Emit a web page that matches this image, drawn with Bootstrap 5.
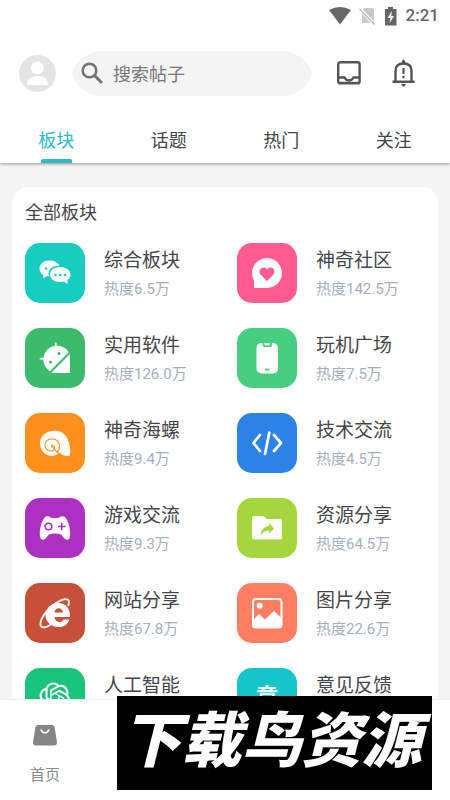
<!DOCTYPE html>
<html lang="zh-CN">
<head>
<meta charset="utf-8">
<meta name="viewport" content="width=device-width, initial-scale=1">
<title>板块</title>
<link href="https://cdn.jsdelivr.net/npm/bootstrap@5.3.0/dist/css/bootstrap.min.css" rel="stylesheet">
<style>
body { font-family: Roboto, "Noto Sans CJK SC", sans-serif; color: #45454a; background: #fff; }
svg { display: block; flex: none; }
.status-bar { height: 32px; padding-right: 11px; color: #666; font-size: 17px; font-weight: 500; }
.top-row { height: 86px; padding: 0 34px 4px 18px; }
.search-box { height: 45px; margin-left: 16px; }
.search-box input, .search-box input:focus { background: #f4f4f4; font-size: 18px; color: #45454a; padding: 2px 0 0 5px; height: 45px; min-width: 0; }
.search-box input::placeholder { color: #77777b; opacity: 1; }
.top-icons { gap: 27px; margin-left: 23px; color: #55555a; }
.app-header { box-shadow: 0 1px 3px rgba(0,0,0,.4); z-index: 1; }
.tab-link { height: 45px; color: #45454a; font-size: 18px; line-height: 46px; text-decoration: none; }
.tab-link.active { color: #2bbcc4; }
.tab-link.active::after { content: ""; display: block; width: 31px; height: 4px; margin: -5px auto 0; background: #2bbcc4; border-radius: 2px 2px 0 0; }
.board-area { background: #f4f4f4; padding: 24px 12px 0; }
.board-panel { background: #fff; border-radius: 16px; padding-top: 13px; }
.board-title { font-size: 18px; line-height: 26px; margin: 0 0 17px 13px; }
.board-item { padding: 0 0 0 13px; height: 85px; color: inherit; text-decoration: none; }
.board-item:nth-child(even) { padding-left: 12px; }
.tile { width: 60px; height: 60px; border-radius: 15px; margin-right: 19px; color: #fff; flex: none; }
.tile-word { font-size: 23px; font-weight: 700; }
.board-name { font-size: 19px; line-height: 28px; margin-top: 4px; }
.board-heat { font-size: 15px; line-height: 24px; margin-top: 2px; color: #a3afc0; }
.c-chat { background: #17cdbf; } .c-heart { background: #ff5b90; }
.c-android { background: #3dbb6c; } .c-phone { background: #45cf7e; }
.c-shell { background: #ff901b; } .c-code { background: #2c83e5; }
.c-game { background: #ad30c2; } .c-folder { background: #a5d63d; }
.c-web { background: #c75138; } .c-photo { background: #ff7e61; }
.c-ai { background: #1ac47d; } .c-idea { background: #16c4cb; }
.bottom-bar { height: 101px; background: #fff; border-top: 1px solid #eee; z-index: 1; }
.home-link { width: 90px; padding-top: 25px; color: #8a8a8a; font-size: 15px; line-height: 24px; text-decoration: none; }
.home-link span { margin-top: 17px; }
.download-banner { left: 117px; right: 18px; bottom: 10px; height: 94px; padding-right: 6px; background: #000; color: #fff; z-index: 2; font-size: 60px; font-weight: 900; font-style: italic; line-height: 92px; }
</style>
<script src="https://cdn.jsdelivr.net/npm/bootstrap@5.3.0/dist/js/bootstrap.bundle.min.js"></script>
</head>
<body>
<div class="d-flex flex-column vh-100 overflow-hidden position-relative">
  <header class="app-header bg-white flex-shrink-0 position-relative">
    <div class="status-bar d-flex align-items-center justify-content-end">
      <svg width="22" height="18" viewBox="0 0 22 18" fill="currentColor"><path d="M0 3Q11-3 22 3L11 17.500Z"/></svg>
      <svg class="ms-2" width="17" height="18" viewBox="0 0 17 18"><path d="M5 1H13Q15 1 15 3V16H3V4Z" fill="#c9c9c9"/><path d="M0 1L16 18" stroke="#fff" stroke-width="3.500"/><path d="M.5 2L15.500 17.500" stroke="#bbb" stroke-width="1.500"/></svg>
      <svg class="ms-2 me-2" width="14" height="19" viewBox="0 0 14 19"><path d="M4 0H9V2H12.500V18.500H1V2H4Z" fill="#666"/><path d="M8 4L3.500 11H6.500L5.500 16L10 9H7.200Z" fill="#fff"/></svg>
      <span>2:21</span>
    </div>
    <div class="top-row d-flex align-items-center">
      <svg width="38" height="38" viewBox="0 0 38 38" role="img" aria-label="头像"><circle cx="19.500" cy="19.500" r="18.500" fill="#e4e4e4"/><circle cx="19.500" cy="14" r="6.500" fill="#fff"/><path d="M9 31C9 25 13 22 19.500 22S30 25 30 31Z" fill="#fff"/></svg>
      <form class="search-box d-flex flex-grow-1">
        <svg width="36" height="45" viewBox="0 0 36 45"><path d="M36 0H30C17 0 5 9 1 19Q-.5 22.500 1 26C5 36 17 45 30 45H36Z" fill="#f4f4f4"/><circle cx="17.500" cy="19.500" r="6.800" fill="none" stroke="#737377" stroke-width="2.500"/><path d="M22.500 24.500L30 32" stroke="#737377" stroke-width="3"/></svg>
        <input class="form-control border-0 rounded-0 shadow-none" type="search" placeholder="搜索帖子" aria-label="搜索帖子">
        <svg width="36" height="45" viewBox="0 0 36 45"><path d="M0 0H6C19 0 31 9 35 19Q36.500 22.500 35 26C31 36 19 45 6 45H0Z" fill="#f4f4f4"/></svg>
      </form>
      <div class="top-icons d-flex align-items-center">
        <button class="btn p-0 border-0" type="button" aria-label="收件箱"><svg width="28" height="28" viewBox="0 0 28 28" fill="none" stroke="#555559" stroke-width="2.400"><rect x="3.200" y="3.200" width="21.400" height="21.200" rx="2"/><path d="M3 18.500H9.500Q11 21.500 14 21.500T18.500 18.500H24.500"/><path d="M4 23.800H24" stroke-width="2"/></svg></button>
        <button class="btn p-0 border-0" type="button" aria-label="通知"><svg width="26" height="28" viewBox="0 0 26 28" fill="none" stroke="#555559" stroke-width="2.400"><path d="M5.500 22V12Q5.500 4.500 13.500 4.500T21.500 12V22M2.500 22.800H24.500"/><path d="M13.500 9V15M13.500 16.800V19.200" stroke-width="2.200"/><path d="M11 25H16L14.300 27.500H12.700Z" fill="#555559" stroke="none"/><path d="M11.500 4Q11.500 1 13.500 .500Q15.500 1 15.500 4Z" fill="#555559" stroke="none"/></svg></button>
      </div>
    </div>
    <nav class="row g-0 text-center">
      <a class="tab-link active col-3" href="#boards" aria-current="page">板块</a>
      <a class="tab-link col-3" href="#topics">话题</a>
      <a class="tab-link col-3" href="#hot">热门</a>
      <a class="tab-link col-3" href="#follow">关注</a>
    </nav>
  </header>

  <main class="board-area flex-grow-1 overflow-hidden" id="boards">
    <section class="board-panel">
      <h1 class="board-title fw-normal">全部板块</h1>
      <div class="row g-0">
        <a class="board-item col-6 d-flex" href="#b1"><span class="tile c-chat"><svg width="60" height="60" viewBox="0 0 60 60" fill="#fff"><path d="M24.500 17.500C19 17.500 14.500 20.700 14.500 25.500C14.500 28.500 16 30.500 18 31.800V35.500L21.500 33.300H24C22 27 27 22.500 34.500 22.800C33 19.500 29 17.500 24.500 17.500Z"/><path d="M35 24C29.300 24 25 27 25 31.500S29.300 39 35 39Q37 39 38.800 38.500L42.500 41V37C44.500 35.500 45.500 34 45.500 31.500C45.500 27 40.700 24 35 24Z"/><g fill="#17cdbf"><circle cx="21" cy="25.500" r="1.300"/><circle cx="30.500" cy="32" r="1.300"/><circle cx="35.200" cy="32" r="1.300"/><circle cx="40" cy="32" r="1.300"/></g></svg></span><span><span class="board-name d-block">综合板块</span><span class="board-heat d-block">热度6.5万</span></span></a>
        <a class="board-item col-6 d-flex" href="#b2"><span class="tile c-heart"><svg width="60" height="60" viewBox="0 0 60 60"><path d="M17 45V37.500A15 15 0 1 1 30 45Z" fill="#fff"/><path d="M30 38L24 32C19.500 27.500 26 21.500 30 26.500C34 21.500 40.500 27.500 36 32Z" fill="#ff5b90"/></svg></span><span><span class="board-name d-block">神奇社区</span><span class="board-heat d-block">热度142.5万</span></span></a>
        <a class="board-item col-6 d-flex" href="#b3"><span class="tile c-android"><svg width="60" height="60" viewBox="0 0 60 60"><path d="M45 26V45H26Z" fill="#fff"/><path d="M24.800 43.200A13.800 13.800 0 1 1 43.800 24.200Z" fill="#fff"/><path d="M30.700 15.500V23M15.500 30.700H22" stroke="#fff" stroke-width="1.800" stroke-linecap="round"/><circle cx="34" cy="25.500" r="1.500" fill="#3dbb6c"/><circle cx="25.500" cy="34" r="1.500" fill="#3dbb6c"/></svg></span><span><span class="board-name d-block">实用软件</span><span class="board-heat d-block">热度126.0万</span></span></a>
        <a class="board-item col-6 d-flex" href="#b4"><span class="tile c-phone"><svg width="60" height="60" viewBox="0 0 60 60"><rect x="19.500" y="15" width="21.500" height="30.500" rx="5" fill="#fff"/><path d="M25.500 14V17Q25.500 19 27.500 19H33Q35 19 35 17V14Z" fill="#45cf7e"/><path d="M27.500 15H33V16.500Q33 17.200 32 17.200H28.500Q27.500 17.200 27.500 16.500Z" fill="#fff"/><path d="M28 41.500H32.500" stroke="#45cf7e" stroke-width="1.700"/></svg></span><span><span class="board-name d-block">玩机广场</span><span class="board-heat d-block">热度7.5万</span></span></a>
        <a class="board-item col-6 d-flex" href="#b5"><span class="tile c-shell"><svg width="60" height="60" viewBox="0 0 60 60"><path d="M15 29C16 22 22 17.800 30 17.800C39 17.800 42.500 24 44.500 32C45.500 37 45.800 40 44.500 43C41 43.500 37 42 34.500 40C31 42.500 27 43.500 23.500 42.500C18 40.500 14.500 35 15 29Z" fill="#fff"/><path d="M36 42C32.500 40 30 37.500 28 34.500M28 34.500C25.500 34 26.500 31.500 28.200 32.200C30.500 33.500 29.500 38 26.500 38C22.500 38.500 19.500 35.500 20 31.500C20.500 28 23.500 26 27 26C32 26 35 29.500 34.500 34C34.300 36.500 33.200 38.500 31.500 39.500" fill="none" stroke="#ff901b" stroke-width="1.100"/></svg></span><span><span class="board-name d-block">神奇海螺</span><span class="board-heat d-block">热度9.4万</span></span></a>
        <a class="board-item col-6 d-flex" href="#b6"><span class="tile c-code"><svg width="60" height="60" viewBox="0 0 60 60" fill="none" stroke="#fff" stroke-width="2.700" stroke-linecap="round" stroke-linejoin="round"><path d="M23 22L16.500 30L23 38M37 22L44 30L37 38M32.300 19.500L28 41"/></svg></span><span><span class="board-name d-block">技术交流</span><span class="board-heat d-block">热度4.5万</span></span></a>
        <a class="board-item col-6 d-flex" href="#b7"><span class="tile c-game"><svg width="60" height="60" viewBox="0 0 60 60"><path d="M20 19C22 18 24 18 25.500 19.500Q30 21 34.500 19.500C36 18 38 18 40 19C43.500 23 45.500 31 45.200 37C45 42.500 41.500 43 39 40L36 36.500Q30 34.500 24 36.500L21 40C18.500 43 15 42.500 14.800 37C14.500 31 16.500 23 20 19Z" fill="#fff"/><circle cx="23.500" cy="28.500" r="3.300" fill="none" stroke="#ad30c2" stroke-width="1.600"/><path d="M33 28.500H40.500M36.700 24.800V32.200" stroke="#ad30c2" stroke-width="1.700"/></svg></span><span><span class="board-name d-block">游戏交流</span><span class="board-heat d-block">热度9.3万</span></span></a>
        <a class="board-item col-6 d-flex" href="#b8"><span class="tile c-folder"><svg width="60" height="60" viewBox="0 0 60 60"><path d="M17 18H26.500L29.500 21H43Q45 21 45 23V39.500Q45 41.500 43 41.500H17Q15 41.500 15 39.500V20Q15 18 17 18Z" fill="#fff"/><path d="M32 25L37 30.500L32 35.500V32.500C28 32.500 26 34 23 37.500C24 32 27 28.500 32 28Z" fill="#a5d63d"/></svg></span><span><span class="board-name d-block">资源分享</span><span class="board-heat d-block">热度64.5万</span></span></a>
        <a class="board-item col-6 d-flex" href="#b9"><span class="tile c-web"><svg width="60" height="60" viewBox="0 0 60 60"><path d="M45 34H29.500C30 40 37 40.500 38.500 36.500H44.500C42.500 42 38 44.500 33 44C26 43.500 20.500 39 20.500 32.500C20.500 25 26.500 20 33 20C41 20 45.500 26 45 34ZM29.500 29.500H38C37.500 24 30 23.500 29.500 29.500Z" fill="#fff"/><path d="M43 23C45.500 17.500 43 14.500 36.500 17.200C27.500 21 18 31 15.800 38.500C14 45.500 19 46 26 41.500" fill="none" stroke="#fff" stroke-width="1.900"/></svg></span><span><span class="board-name d-block">网站分享</span><span class="board-heat d-block">热度67.8万</span></span></a>
        <a class="board-item col-6 d-flex" href="#b10"><span class="tile c-photo"><svg width="60" height="60" viewBox="0 0 60 60"><rect x="16" y="16" width="28.500" height="28.500" rx="3" fill="none" stroke="#fff" stroke-width="2"/><circle cx="22.700" cy="22.700" r="3" fill="#fff"/><path d="M16 37L22 31L28 36.500L37 28L44.500 35V44.500H16Z" fill="#fff"/></svg></span><span><span class="board-name d-block">图片分享</span><span class="board-heat d-block">热度22.6万</span></span></a>
        <a class="board-item col-6 d-flex" href="#b11"><span class="tile c-ai"><svg width="60" height="60" viewBox="0 0 60 60" fill="#fff"><path transform="translate(14.500 14.500) scale(1.280)" d="M22.2819 9.8211a5.9847 5.9847 0 0 0-.5157-4.9108 6.0462 6.0462 0 0 0-6.5098-2.9A6.0651 6.0651 0 0 0 4.9807 4.1818a5.9847 5.9847 0 0 0-3.9977 2.9 6.0462 6.0462 0 0 0 .7427 7.0966 5.98 5.98 0 0 0 .511 4.9107 6.051 6.051 0 0 0 6.5146 2.9001A5.9847 5.9847 0 0 0 13.2599 24a6.0557 6.0557 0 0 0 5.7718-4.2058 5.9894 5.9894 0 0 0 3.9977-2.9001 6.0557 6.0557 0 0 0-.7475-7.0729zm-9.022 12.6081a4.4755 4.4755 0 0 1-2.8764-1.0408l.1419-.0804 4.7783-2.7582a.7948.7948 0 0 0 .3927-.6813v-6.7369l2.02 1.1686a.071.071 0 0 1 .038.052v5.5826a4.504 4.504 0 0 1-4.4945 4.4944zm-9.6607-4.1254a4.4708 4.4708 0 0 1-.5346-3.0137l.142.0852 4.783 2.7582a.7712.7712 0 0 0 .7806 0l5.8428-3.3685v2.3324a.0804.0804 0 0 1-.0332.0615L9.74 19.9502a4.4992 4.4992 0 0 1-6.1408-1.6464zM2.3408 7.8956a4.485 4.485 0 0 1 2.3655-1.9728V11.6a.7664.7664 0 0 0 .3879.6765l5.8144 3.3543-2.0201 1.1685a.0757.0757 0 0 1-.071 0l-4.8303-2.7865A4.504 4.504 0 0 1 2.3408 7.872zm16.5963 3.8558L13.1038 8.364 15.1192 7.2a.0757.0757 0 0 1 .071 0l4.8303 2.7913a4.4944 4.4944 0 0 1-.6765 8.1042v-5.6772a.79.79 0 0 0-.407-.667zm2.0107-3.0231l-.142-.0852-4.7735-2.7818a.7759.7759 0 0 0-.7854 0L9.409 9.2297V6.8974a.0662.0662 0 0 1 .0284-.0615l4.8303-2.7866a4.4992 4.4992 0 0 1 6.6802 4.66zM8.3065 12.863l-2.02-1.1638a.0804.0804 0 0 1-.038-.0567V6.0742a4.4992 4.4992 0 0 1 7.3757-3.4537l-.142.0805L8.704 5.459a.7948.7948 0 0 0-.3927.6813zm1.0976-2.3654l2.602-1.4998 2.6069 1.4998v2.9994l-2.5974 1.4997-2.6067-1.4997Z"/></svg></span><span class="board-name">人工智能</span></a>
        <a class="board-item col-6 d-flex" href="#b12"><span class="tile tile-word c-idea d-flex align-items-center justify-content-center">意</span><span class="board-name">意见反馈</span></a>
      </div>
    </section>
  </main>

  <nav class="bottom-bar flex-shrink-0 position-relative">
    <a class="home-link d-flex flex-column align-items-center" href="#home"><svg width="24" height="21" viewBox="0 0 24 21"><path d="M5 0H19Q21 0 21.500 2L24 17Q24 20.500 21 20.500H3Q0 20.500 0 17L2.500 2Q3 0 5 0Z" fill="#858585"/><path d="M8 5Q12 11 16 5" fill="none" stroke="#fff" stroke-width="1.600" stroke-linecap="round"/></svg><span>首页</span></a>
  </nav>
  <div class="download-banner position-absolute text-center text-nowrap">下载鸟资源</div>
</div>
</body>
</html>
